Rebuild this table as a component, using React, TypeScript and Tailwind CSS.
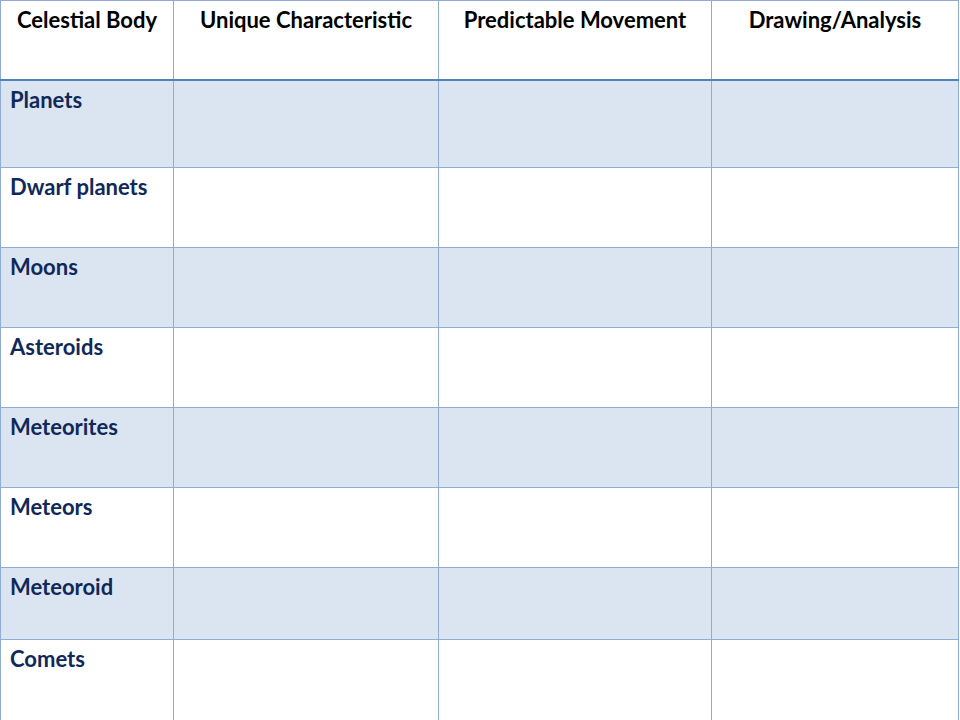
import React from 'react'

const rows = [
    { name: 'Planets', h: 'h-[86px]', shade: true },
    { name: 'Dwarf planets', h: 'h-[79px]', shade: false },
    { name: 'Moons', h: 'h-[79px]', shade: true },
    { name: 'Asteroids', h: 'h-[79px]', shade: false },
    { name: 'Meteorites', h: 'h-[79px]', shade: true },
    { name: 'Meteors', h: 'h-[79px]', shade: false },
    { name: 'Meteoroid', h: 'h-[71px]', shade: true },
    { name: 'Comets', h: 'h-[80px]', shade: false },
]

const headers = ['Celestial Body', 'Unique Characteristic', 'Predictable Movement', 'Drawing/Analysis']

const App = () => {
    return (
        <div className="w-[960px] h-[720px] overflow-hidden bg-white" style={{ fontFamily: 'Lato, "Open Sans", sans-serif' }}>
            <div className="w-[959px] bg-[#8fadd4] pt-px pl-px">
                {/* header */}
                <div className="grid grid-cols-[172px_264px_272px_246px] gap-x-px pr-px">
                    {headers.map((t) => (
                        <div key={t} className="h-[78px] bg-white text-center font-bold text-[22px] leading-none text-black pt-[8px]">
                            {t}
                        </div>
                    ))}
                </div>
                <div className="h-[2px] bg-[#4f81bd] -ml-px"></div>

                {/* rows */}
                <div className="flex flex-col gap-y-px pr-px">
                    {rows.map((r) => (
                        <div key={r.name} className="grid grid-cols-[172px_264px_272px_246px] gap-x-px">
                            <div className={`${r.h} ${r.shade ? 'bg-[#dbe5f1]' : 'bg-white'} pl-[9px] pt-[8px] font-bold text-[22px] leading-none text-[#10295a]`}>
                                {r.name}
                            </div>
                            <div className={`${r.h} ${r.shade ? 'bg-[#dbe5f1]' : 'bg-white'}`}></div>
                            <div className={`${r.h} ${r.shade ? 'bg-[#dbe5f1]' : 'bg-white'}`}></div>
                            <div className={`${r.h} ${r.shade ? 'bg-[#dbe5f1]' : 'bg-white'}`}></div>
                        </div>
                    ))}
                </div>
            </div>
        </div>
    )
}

export default App
